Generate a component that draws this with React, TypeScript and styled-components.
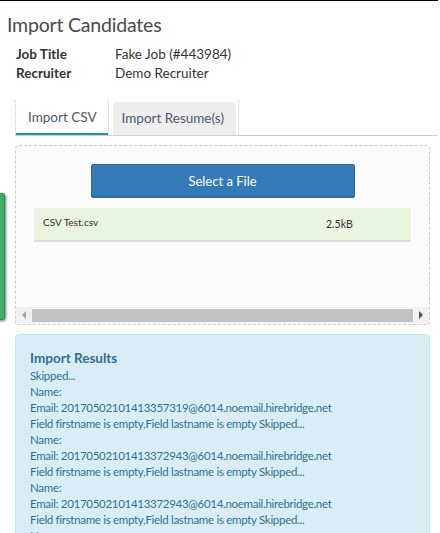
import styled, { createGlobalStyle } from "styled-components";

const GlobalStyle = createGlobalStyle`
	html, body {
		margin: 0;
		padding: 0;
		background: #fff;
		font-family: Lato, "Open Sans", sans-serif;
		overflow: hidden;
	}
`;

const resultLines = [
	"Skipped...",
	"Name:",
	"Email: 20170502101413357319@6014.noemail.hirebridge.net",
	"Field firstname is empty,Field lastname is empty Skipped...",
	"Name:",
	"Email: 20170502101413372943@6014.noemail.hirebridge.net",
	"Field firstname is empty,Field lastname is empty Skipped...",
	"Name:",
	"Email: 20170502101413372943@6014.noemail.hirebridge.net",
	"Field firstname is empty,Field lastname is empty Skipped...",
	"Name:",
];

export default function App() {
	return (
		<Page>
			<GlobalStyle />
			<SideTab />
			<Title>Import Candidates</Title>

			<Details>
				<dt>Job Title</dt>
				<dd>Fake Job (#443984)</dd>
				<dt>Recruiter</dt>
				<dd>Demo Recruiter</dd>
			</Details>

			<Tabs>
				<TabItem $active>
					<TabLink $active>Import CSV</TabLink>
				</TabItem>
				<TabItem>
					<TabLink>Import Resume(s)</TabLink>
				</TabItem>
			</Tabs>

			<DropZone>
				<SelectButton>Select a File</SelectButton>
				<FileRow>
					<FileName>CSV Test.csv</FileName>
					<FileSize>2.5kB</FileSize>
				</FileRow>
				<Scrollbar>
					<Arrow $dir="left" />
					<Thumb />
					<Arrow $dir="right" />
				</Scrollbar>
			</DropZone>

			<Results>
				<h3>Import Results</h3>
				{resultLines.map((line, i) => (
					<div key={i}>{line}</div>
				))}
			</Results>
		</Page>
	);
}

const Page = styled.div`
	position: relative;
	width: 438px;
	height: 533px;
	border-top: 1px solid #000;
	overflow: hidden;
	color: #444;
`;

const SideTab = styled.div`
	position: absolute;
	left: -6px;
	top: 192px;
	width: 9px;
	height: 125px;
	background: #3fae6a;
	border: 1px solid #2c8a50;
	border-radius: 3px;
	box-shadow: 1px 1px 3px rgba(0, 0, 0, 0.55);
`;

const Title = styled.h1`
	margin: 0;
	padding: 12px 0 0 7px;
	font-size: 19.5px;
	font-weight: 400;
	line-height: 24px;
	color: #4a4a4a;
	letter-spacing: -0.2px;
`;

const Details = styled.dl`
	margin: 8px 0 0 16px;
	display: grid;
	grid-template-columns: 99px auto;
	font-size: 13.5px;
	line-height: 19px;
	color: #333;

	dt {
		font-weight: 700;
	}

	dd {
		margin: 0;
	}
`;

const Tabs = styled.div`
	margin: 17px 0 0 15px;
	display: flex;
	gap: 3px;
	height: 35px;
	border-bottom: 1px solid #ccc;
`;

const TabItem = styled.div<{ $active?: boolean }>`
	display: flex;
	padding-right: ${(p) => (p.$active ? "0" : "2px")};
	border-left: 1px dotted ${(p) => (p.$active ? "#ccc" : "transparent")};
	border-right: 1px dotted #ccc;
`;

const TabLink = styled.div<{ $active?: boolean }>`
	display: flex;
	align-items: center;
	padding: ${(p) => (p.$active ? "0 11px 0 12px" : "0 12px 0 9px")};
	margin-top: ${(p) => (p.$active ? "0" : "2px")};
	font-size: 13.5px;
	color: #4a5a6a;
	border-bottom: 2px solid ${(p) => (p.$active ? "#1b8dc4" : "transparent")};
	background: ${(p) => (p.$active ? "#fff" : "#eee")};
	border-radius: ${(p) => (p.$active ? "0" : "4px 4px 0 0")};
`;

const DropZone = styled.div`
	margin: 9px 8px 0 15px;
	height: 180px;
	box-sizing: border-box;
	border: 1px dashed #ccc;
	border-radius: 4px;
	background: #fcfcfc;
	display: flex;
	flex-direction: column;
	align-items: center;
	padding-top: 18px;
`;

const SelectButton = styled.button`
	width: 264px;
	height: 34px;
	background: #337ab7;
	border: 1px solid #2e6da4;
	border-radius: 2px;
	color: #fff;
	font-family: Lato, sans-serif;
	font-size: 13px;
	box-shadow: inset 0 -1px 0 rgba(0, 0, 0, 0.1);
`;

const FileRow = styled.div`
	margin-top: 10px;
	align-self: flex-start;
	margin-left: 18px;
	width: 377px;
	height: 34px;
	box-sizing: border-box;
	background: #eaf5df;
	border-bottom: 2px solid #ddd;
	display: flex;
	align-items: center;
	font-size: 10px;
	color: #333;
`;

const FileName = styled.span`
	margin-left: 9px;
	margin-top: -4px;
	width: 283px;
`;

const FileSize = styled.span`
	font-size: 10.5px;
`;

const Scrollbar = styled.div`
	margin-top: auto;
	margin-bottom: 1px;
	align-self: stretch;
	height: 16px;
	background: #f1f1f1;
	display: flex;
	align-items: center;
`;

const Thumb = styled.div`
	flex: 1;
	height: 13px;
	background: #c1c1c1;
`;

const Arrow = styled.div<{ $dir: "left" | "right" }>`
	width: 16px;
	height: 16px;
	display: flex;
	align-items: center;
	justify-content: center;

	&::before {
		content: "";
		border-top: 4px solid transparent;
		border-bottom: 4px solid transparent;
		${(p) =>
			p.$dir === "left"
				? "border-right: 4px solid #a3a3a3;"
				: "border-left: 4px solid #505050;"}
	}
`;

const Results = styled.div`
	margin: 9px 8px 0 15px;
	padding: 14px 14px 40px;
	background: #d9edf7;
	border: 1px solid #bce8f1;
	border-radius: 4px;
	color: #31708f;
	font-size: 11.5px;
	letter-spacing: -0.3px;
	line-height: 16px;

	h3 {
		margin: 0 0 1px;
		font-size: 13.5px;
		line-height: 18px;
		font-weight: 700;
		letter-spacing: 0;
	}
`;
